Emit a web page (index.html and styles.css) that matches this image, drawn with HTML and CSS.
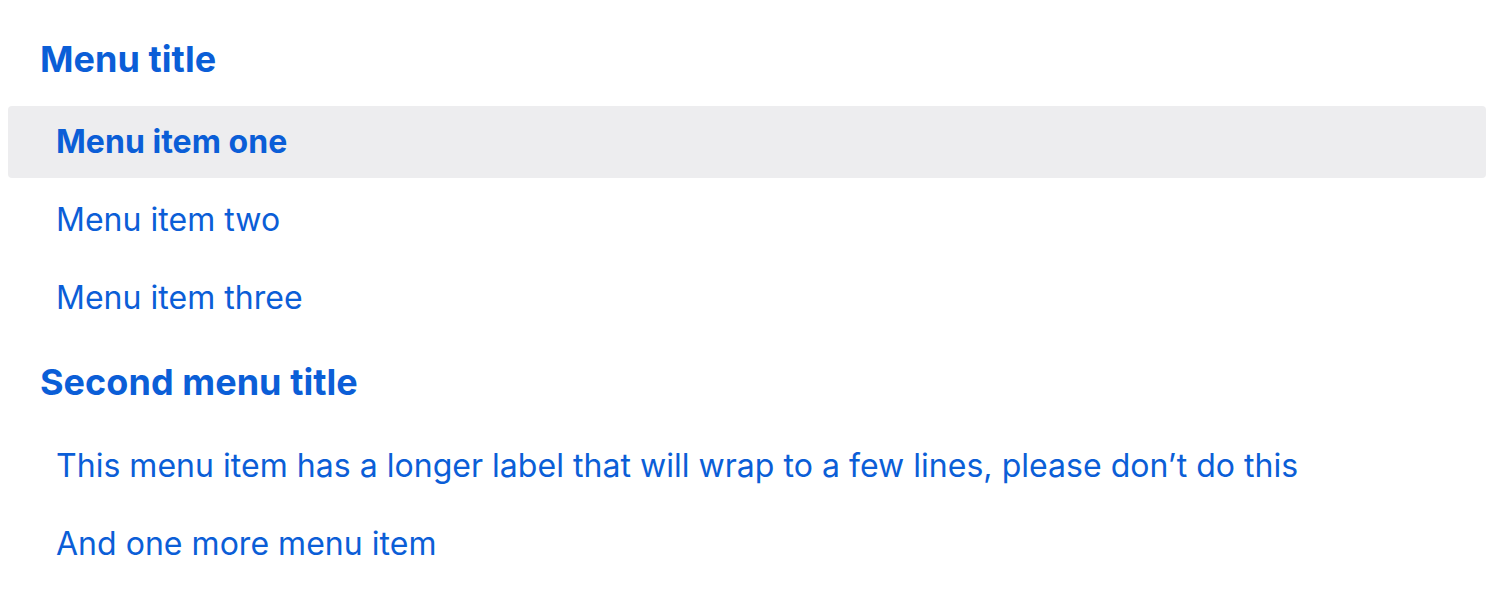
FILE: index.html
```html
<!DOCTYPE html>
<html lang="en">
<head>
<meta charset="utf-8">
<title>Menu</title>
<link rel="stylesheet" href="styles.css">
</head>
<body>
<nav class="menu">
  <section class="menu-group">
    <h2 class="menu-title">Menu title</h2>
    <ul class="menu-list">
      <li class="menu-item is-active">Menu item one</li>
      <li class="menu-item">Menu item two</li>
      <li class="menu-item">Menu item three</li>
    </ul>
  </section>
  <section class="menu-group">
    <h2 class="menu-title menu-title-next">Second menu title</h2>
    <ul class="menu-list">
      <li class="menu-item">This menu item has a longer label that will wrap to a few lines, please don’t do this</li>
      <li class="menu-item">And one more menu item</li>
    </ul>
  </section>
</nav>
</body>
</html>
```

FILE: styles.css
```css
* { box-sizing: border-box; }
html, body { margin: 0; padding: 0; background: #ffffff; }
body {
  font-family: Inter, "Noto Sans", sans-serif;
  color: #0b5ed7;
}
.menu {
  display: flex;
  flex-direction: column;
  padding: 12px 10px 0 8px;
}
.menu-group { display: flex; flex-direction: column; }
.menu-title {
  margin: 0;
  padding: 23px 32px;
  font-size: 36px;
  line-height: 48px;
  font-weight: 700;
  letter-spacing: 0.05px;
}
.menu-title-next {
  padding-top: 24px;
  padding-bottom: 24px;
}
.menu-list {
  list-style: none;
  margin: 0;
  padding: 0;
  display: flex;
  flex-direction: column;
  gap: 6px;
}
.menu-item {
  display: flex;
  align-items: center;
  min-height: 72px;
  padding: 0 48px;
  border-radius: 4px;
  font-size: 32px;
  line-height: 40px;
  font-weight: 400;
  letter-spacing: 0.03px;
}
.menu-item.is-active {
  background: #ededef;
  font-weight: 700;
}
```
